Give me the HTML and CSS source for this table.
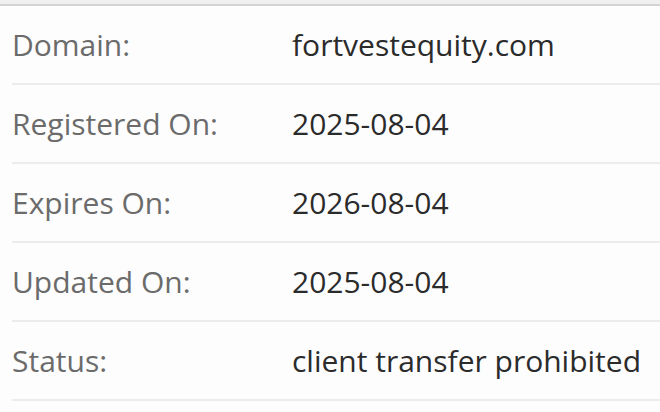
FILE: index.html
```html
<!DOCTYPE html>
<html>
<head>
<meta charset="utf-8">
<link rel="stylesheet" href="styles.css">
</head>
<body>
<div class="topbar"></div>
<div class="info">
  <div class="row"><div class="label">Domain:</div><div class="value">fortvestequity.com</div></div>
  <div class="row"><div class="label">Registered On:</div><div class="value">2025-08-04</div></div>
  <div class="row"><div class="label">Expires On:</div><div class="value">2026-08-04</div></div>
  <div class="row"><div class="label">Updated On:</div><div class="value">2025-08-04</div></div>
  <div class="row"><div class="label">Status:</div><div class="value">client transfer prohibited</div></div>
</div>
</body>
</html>
```
FILE: styles.css
```css
html, body {
  margin: 0;
  padding: 0;
  background: #fdfdfd;
  font-family: "Open Sans", "Noto Sans", sans-serif;
}
.topbar {
  height: 4px;
  background: #f0f0f0;
  border-bottom: 2px solid #d4d4d4;
}
.info {
  padding-left: 12px;
}
.row {
  display: flex;
  align-items: center;
  height: 77px;
  border-bottom: 2px solid #ececec;
  font-size: 30px;
}
.label {
  width: 280px;
  flex: none;
  color: #6b6b6b;
}
.value {
  color: #2b2b2b;
}
```
